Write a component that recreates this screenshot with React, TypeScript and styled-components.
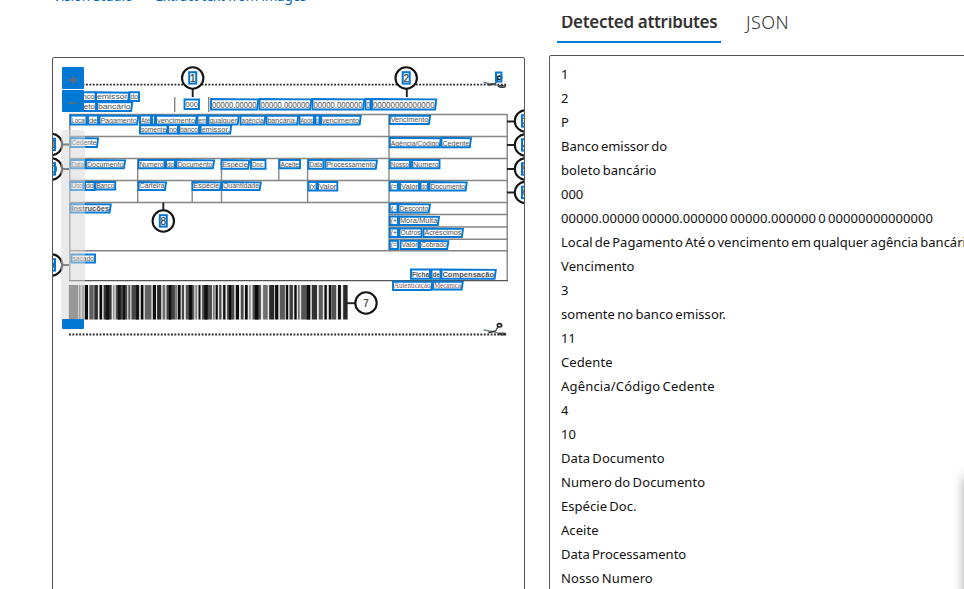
import React from "react";
import styled, { createGlobalStyle } from "styled-components";

const GlobalStyle = createGlobalStyle`
  * { box-sizing: border-box; }
  html, body { margin: 0; background: #fff; overflow: hidden; }
  body { font-family: "Noto Sans", "Open Sans", sans-serif; color: #111; }
`;

const Page = styled.div`
  width: 964px;
  height: 589px;
  overflow: hidden;
  display: grid;
  grid-template-columns: 473px 440px;
  column-gap: 24px;
  padding-left: 52px;
  position: relative;
`;

const LeftColumn = styled.div`
  display: flex;
  flex-direction: column;
  height: 589px;
  min-height: 0;
`;

const Breadcrumb = styled.nav`
  height: 57px;
  flex: none;
  display: flex;
  align-items: flex-start;
  overflow: hidden;
  padding-left: 1px;
`;

const Crumb = styled.a`
  font-size: 13.5px;
  line-height: 20px;
  margin-top: -14px;
  color: #0067b8;
  white-space: pre;
  letter-spacing: -0.19px;
`;

const CrumbArrow = styled.span`
  font-size: 12.5px;
  line-height: 20px;
  margin: -13px 10px 0 9px;
  color: #666;
`;

const Viewer = styled.section`
  position: relative;
  height: 560px;
  flex: none;
  border: 1px solid #555;
  border-radius: 2px;
  overflow: hidden;
`;

const Canvas = styled.svg`
  display: block;
`;

const ZoomControls = styled.div`
  position: absolute;
  left: 9px;
  top: 9px;
  display: flex;
  flex-direction: column;
  gap: 1px;
`;

const ZoomButton = styled.button`
  width: 22px;
  height: 22px;
  padding: 0;
  border: 0;
  border-radius: 1px;
  background: #0078d4;
  color: #6a6a70;
  display: flex;
  align-items: center;
  justify-content: center;
`;

const SliderTrack = styled.div`
  position: absolute;
  left: 8px;
  top: 72px;
  width: 24px;
  height: 190px;
  border-radius: 4px 4px 0 0;
  background: rgba(215, 215, 215, 0.52);
`;

const SliderThumb = styled.div`
  position: absolute;
  left: 9px;
  top: 261px;
  width: 22px;
  height: 10px;
  border-radius: 1px;
  background: #0078d4;
`;

const RightColumn = styled.div`
  display: flex;
  flex-direction: column;
  padding-top: 16px;
  height: 589px;
`;

const Tabs = styled.div`
  display: flex;
  height: 27px;
  margin-left: 8px;
  flex: none;
  overflow: hidden;
`;

const Tab = styled.div<{ $active?: boolean }>`
  height: 27px;
  width: ${(p) => (p.$active ? "164px" : "60px")};
  margin-right: 21px;
  padding-left: 4px;
  font-size: ${(p) => (p.$active ? 17 : 18)}px;
  line-height: 24px;
  font-weight: ${(p) => (p.$active ? 600 : 300)};
  letter-spacing: ${(p) => (p.$active ? -0.32 : 0.4)}px;
  color: #333;
  white-space: nowrap;
  border-bottom: 2px solid ${(p) => (p.$active ? "#0078d4" : "transparent")};
`;

const TabLabel = styled.span`
  display: block;
  margin-top: -6px;
`;

const Results = styled.ul`
  list-style: none;
  margin: 12px 0 0;
  padding: 6px 0 0 11px;
  width: 440px;
  height: 560px;
  flex: none;
  border: 1px solid #555;
  border-radius: 2px;
`;

const ResultRow = styled.li<{ $spacing: number }>`
  height: 24px;
  line-height: 24px;
  font-size: 13px;
  white-space: nowrap;
  letter-spacing: ${(p) => p.$spacing}px;
  word-spacing: -1.2px;
`;

const EdgeShadow = styled.div`
  position: absolute;
  left: 964px;
  top: 477px;
  width: 20px;
  height: 140px;
  box-shadow: 0 0 12px rgba(0, 0, 0, 0.35);
`;

const results: [string, number][] = [
  ["1", 0],
  ["2", 0],
  ["P", 0],
  ["Banco emissor do", -0.03],
  ["boleto bancário", 0.05],
  ["000", 0],
  ["00000.00000 00000.000000 00000.000000 0 00000000000000", 0.06],
  ["Local de Pagamento Até o vencimento em qualquer agência bancária. Após o vencimento", 0],
  ["Vencimento", 0.1],
  ["3", 0],
  ["somente no banco emissor.", 0.05],
  ["11", -0.3],
  ["Cedente", 0.1],
  ["Agência/Código Cedente", 0.18],
  ["4", 0],
  ["10", 0],
  ["Data Documento", 0.08],
  ["Numero do Documento", 0.1],
  ["Espécie Doc.", 0.05],
  ["Aceite", 0.05],
  ["Data Processamento", 0],
  ["Nosso Numero", 0.1],
];

type WordSpec = [string, number, number, number, number, string?];

/* text, left, right, top, bottom, style */
const words: WordSpec[] = [
  ["Banco", 72, 95.5, 92.3, 101],
  ["emissor", 96, 128.5, 92.3, 101],
  ["do", 129.5, 139, 92.3, 101],
  ["boleto", 72, 96, 102, 111],
  ["bancário", 97, 131.5, 102, 111],
  ["000", 184.5, 199, 99.5, 109],
  ["00000.00000", 211, 257.5, 99, 109.5],
  ["00000.000000", 259.5, 310.5, 99, 109.5],
  ["00000.000000", 312.5, 363.5, 99, 109.5],
  ["0", 365.5, 370.5, 99, 109.5],
  ["00000000000000", 372, 435.5, 99, 109.5],
  ["Local", 70.5, 86.5, 115.5, 124.5],
  ["de", 88, 98, 115.5, 124.5],
  ["Pagamento", 99.5, 137.5, 115.5, 124.5],
  ["Até", 140, 151, 115.5, 124.5],
  ["o", 152, 155, 115.5, 124.5],
  ["vencimento", 156, 196, 115.5, 124.5],
  ["em", 197.5, 207, 115.5, 124.5],
  ["qualquer", 208.5, 238, 115.5, 124.5],
  ["agência", 240.5, 264.5, 115.5, 124.5],
  ["bancária.", 266.5, 297.5, 115.5, 124.5],
  ["Após", 299.5, 314, 115.5, 124.5],
  ["o", 315.5, 319.5, 115.5, 124.5],
  ["vencimento", 321, 360, 115.5, 124.5],
  ["somente", 140, 167, 125, 133.5],
  ["no", 168, 178, 125, 133.5],
  ["banco", 179, 199, 125, 133.5],
  ["emissor.", 200.5, 230.5, 125, 133.5],
  ["Vencimento", 389.8, 429.3, 115.5, 124],
  ["Agência/Código", 389.8, 440, 137.8, 147.3],
  ["Cedente", 441.5, 470.2, 137.8, 147.3],
  ["Cedente", 70.5, 97.3, 138, 147],
  ["Data", 70.5, 85, 160, 168.3],
  ["Documento", 86, 124.3, 160, 168.3],
  ["Numero", 138.5, 164.5, 160, 168.3],
  ["do", 166, 175, 160, 168.3],
  ["Documento", 176.5, 213.3, 160, 168.3],
  ["Espécie", 221.5, 248.5, 160, 168.8],
  ["Doc.", 251, 265.5, 160, 168.8],
  ["Aceite", 279.5, 300, 160, 168.3],
  ["Data", 308.5, 323.5, 160, 168.8],
  ["Processamento", 325.5, 376.2, 160, 168.8],
  ["Nosso", 389.8, 410, 160, 168.3],
  ["Numero", 412, 439.5, 160, 168.3],
  ["Uso", 70.5, 83.5, 182, 190],
  ["do", 85, 94.5, 182, 190],
  ["Banco", 95.5, 115.2, 182, 189.5],
  ["Carteira", 138.5, 165.3, 182, 190],
  ["Espécie", 192.5, 220.3, 182, 190],
  ["Quantidade", 222, 260, 182, 190],
  ["(x", 308.5, 316.5, 182, 190.5],
  ["Valor", 318, 337.3, 182, 190.5],
  ["(=", 389.8, 398, 182, 190.5],
  ["Valor", 400, 419, 182, 190.5],
  ["do", 420.5, 428, 182, 190.5],
  ["Documento", 429.5, 466, 182, 190.5],
  ["Instruções", 70.5, 110, 204, 212.5, "bold"],
  ["(-", 389.8, 397.5, 204, 212.5],
  ["Desconto", 398.5, 429.2, 204, 212.5],
  ["(+", 389.8, 398, 216.5, 225],
  ["Mora/Multa", 399, 438.2, 216.5, 225],
  ["(+", 389.8, 398, 228.5, 237],
  ["Outros", 399.5, 421.5, 228.5, 237],
  ["Acréscimos", 423.5, 462.2, 228.5, 237],
  ["(=", 389.8, 398, 240.8, 249],
  ["Valor", 400.5, 418.5, 240.8, 249],
  ["Cobrado", 420, 447.6, 240.8, 249],
  ["sacado", 71.5, 95, 254.5, 262.5],
  ["Ficha", 411, 430, 269.5, 278.7, "bold"],
  ["de", 431.5, 440.5, 269.5, 278.7, "bold"],
  ["Compensação", 441.5, 495, 269.5, 278.7, "bold"],
  ["Autenticação", 393, 431.5, 281.5, 290, "serif"],
  ["Mecânica", 433, 462, 281.5, 289.5, "serif"],
];

const rules: [number, number, number, number][] = [
  [69.5, 114.5, 507.5, 114.5],
  [69.5, 136.5, 507.5, 136.5],
  [69.5, 158.5, 507.5, 158.5],
  [69.5, 180.5, 507.5, 180.5],
  [69.5, 202.5, 507.5, 202.5],
  [69.5, 250.8, 507.5, 250.8],
  [389, 214.5, 507.5, 214.5],
  [389, 227, 507.5, 227],
  [389, 239.2, 507.5, 239.2],
  [69.8, 114, 69.8, 281],
  [507.2, 114, 507.2, 281],
  [389, 114, 389, 251],
  [137.7, 158, 137.7, 203],
  [221.5, 158, 221.5, 203],
  [307.6, 158, 307.6, 203],
  [278.8, 158, 278.8, 181],
  [192.2, 180, 192.2, 203],
  [174.7, 97, 174.7, 112],
  [208.7, 97, 208.7, 112],
];

type CalloutSpec = { x: number; y: number; label: string; boxed?: boolean; stem: [number, number, number, number] };

const callouts: CalloutSpec[] = [
  { x: 192.7, y: 78, label: "1", boxed: true, stem: [192.7, 89, 192.7, 97] },
  { x: 406.2, y: 78, label: "2", boxed: true, stem: [406.8, 89, 406.8, 97] },
  { x: 525.5, y: 121, label: "3", boxed: true, stem: [507, 121.5, 515, 121.5] },
  { x: 525.5, y: 145, label: "4", boxed: true, stem: [507, 145, 515, 145] },
  { x: 525.5, y: 169, label: "5", boxed: true, stem: [507, 169, 515, 169] },
  { x: 525.5, y: 192.5, label: "6", boxed: true, stem: [507, 192.5, 515, 192.5] },
  { x: 51.5, y: 144.5, label: "11", boxed: true, stem: [62, 144.5, 69, 144.5] },
  { x: 51.5, y: 169, label: "10", boxed: true, stem: [62, 169, 69, 169] },
  { x: 51.5, y: 265, label: "9", boxed: true, stem: [62, 265, 69, 265] },
  { x: 163.3, y: 221, label: "8", boxed: true, stem: [163.3, 202.5, 163.3, 210] },
  { x: 366, y: 303, label: "7", stem: [347, 303.2, 355, 303.2] },
];

/* left edge, width, shade */
const bars: [number, number, number][] = [
  [69, 9, 85], [79.3, 1, 90], [82, 1.6, 110], [84.8, 3, 10], [89.5, 4, 95], [94.5, 3.2, 45], [99.7, 2.2, 10],
  [103.8, 7.6, 55], [106, 3, 20], [113.3, 1, 140], [116, 11, 75], [118, 2.5, 20], [123, 2, 20], [128.5, 1.6, 90],
  [131.7, 7.3, 70], [136.5, 2, 10], [141, 2.2, 10], [145, 6.2, 100], [153, 2.8, 15], [157.3, 3.7, 40],
  [162.8, 2.2, 110], [166.7, 8, 65], [169, 2, 10], [175.3, 2, 120], [178.2, 2.2, 10], [182, 1.8, 70],
  [186, 8, 85], [189, 3, 15], [195.5, 1.4, 130], [198.7, 1.6, 20], [202.3, 9.5, 80], [204.5, 3, 15],
  [213.2, 1.3, 120], [215.8, 1.8, 10], [219.3, 2, 80], [223.3, 2, 20], [227.3, 6.8, 75], [229, 2, 10],
  [236, 2.8, 15], [241, 2.4, 75], [245.2, 2.3, 10], [249.3, 1.2, 140], [252.7, 8, 80], [255, 3.2, 10],
  [263.3, 4.2, 110], [269.4, 4.6, 40], [275.3, 2.8, 10], [280, 4.7, 90], [286, 2, 15], [289.7, 3, 60],
  [294.5, 2, 10], [298.2, 1.3, 110], [301.4, 8.6, 85], [307, 3, 15], [312, 4.8, 50], [319, 3.6, 90],
  [324.6, 2, 10], [329, 1.8, 15], [331.5, 4.5, 80], [338.2, 2.5, 15], [343.4, 4, 40],
];

const fontFor = (kind?: string) =>
  kind === "serif" ? "Liberation Serif, serif" : "Liberation Sans, sans-serif";

function Word({ spec }: { spec: WordSpec }) {
  const [text, l, r, t, b, kind] = spec;
  const slant = text.length > 6 ? 0.8 : 0;
  const numeric = t === 99;
  return (
    <g>
      <text
        x={l + 0.9}
        y={b - 1.7}
        textLength={r - l - 1.8}
        lengthAdjust="spacingAndGlyphs"
        fontSize={numeric ? 9.5 : 7.8}
        fontWeight={kind === "bold" ? 700 : 400}
        fontFamily={fontFor(kind)}
        fill={kind === "serif" ? "#80505c" : "#505050"}
      >
        {text}
      </text>
      <path
        d={`M${l} ${t}L${r + slant} ${t + slant / 2}L${r - slant / 2} ${b}L${l} ${b}Z`}
        fill="none"
        stroke="#0078d4"
        strokeWidth="1.9"
      />
    </g>
  );
}

function Callout({ x, y, label, boxed, stem }: CalloutSpec) {
  return (
    <g>
      <path d={`M${stem[0]} ${stem[1]}L${stem[2]} ${stem[3]}`} stroke="#222" strokeWidth="1.9" />
      <circle cx={x} cy={y} r="10.7" fill="#fff" stroke="#151515" strokeWidth="2.1" />
      <text
        x={x}
        y={y + 3.6}
        fontSize="10"
        textAnchor="middle"
        fontFamily="Liberation Sans, sans-serif"
        fill="#333"
        stroke="#333"
        strokeWidth="0.2"
      >
        {label}
      </text>
      {boxed && (
        <rect x={x - 3.5} y={y - 5.8} width="7" height="11.4" fill="none" stroke="#0078d4" strokeWidth="2" />
      )}
    </g>
  );
}

function Scissors({ y }: { y: number }) {
  return (
    <g fill="none" strokeLinecap="round">
      <path d={`M484 ${y - 4}L494 ${y - 2}L504 ${y + 1}`} stroke="#6b8080" strokeWidth="1.3" />
      <path d={`M489 ${y - 1.5}L495.5 ${y - 3}L498 ${y - 7}`} stroke="#333" strokeWidth="1.3" />
      <ellipse cx="499.5" cy={y - 8.7} rx="2.2" ry="1.7" stroke="#222" strokeWidth="1.6" />
      <ellipse cx="502" cy={y} rx="3.6" ry="0.8" stroke="#333" strokeWidth="1.2" />
    </g>
  );
}

function Boleto() {
  return (
    <Canvas width="471" height="531" viewBox="53 58 471 531">
      <g stroke="#2a2a2a" strokeWidth="1.8" strokeDasharray="1.9 1.5">
        <path d="M69 84.7H507" />
        <path d="M69 334.5H507" />
      </g>
      <g stroke="#858585" strokeWidth="1.4">
        {rules.map((r, i) => (
          <line key={i} x1={r[0]} y1={r[1]} x2={r[2]} y2={r[3]} />
        ))}
      </g>
      <path d="M69 280.6H508" stroke="#555" strokeWidth="1.2" />
      <rect x="69" y="285" width="278.5" height="34.5" fill="#e6e6e6" />
      {bars.map(([x, w, c], i) => (
        <rect key={i} x={x - 0.2} y="285" width={w + 0.4} height="34.5" fill={`rgb(${c},${c},${c})`} />
      ))}
      {callouts.map((c) => (
        <Callout key={c.label} {...c} />
      ))}
      <Scissors y={86.5} />
      <rect x="496" y="72.5" width="5.4" height="9" fill="none" stroke="#0078d4" strokeWidth="2" />
      <Scissors y={334} />
      {words.map((w, i) => (
        <Word key={i} spec={w} />
      ))}
    </Canvas>
  );
}

export default function App() {
  return (
    <>
      <GlobalStyle />
      <Page>
        <LeftColumn>
          <Breadcrumb>
            <Crumb>Vision Studio</Crumb>
            <CrumbArrow>›</CrumbArrow>
            <Crumb>Extract text from images</Crumb>
          </Breadcrumb>
          <Viewer>
            <Boleto />
            <SliderTrack />
            <ZoomControls>
              <ZoomButton aria-label="Zoom in">
                <svg width="22" height="22" viewBox="0 0 22 22">
                  <path d="M7 13H15M11 9V17" stroke="currentColor" strokeWidth="1.8" />
                </svg>
              </ZoomButton>
              <ZoomButton aria-label="Zoom out">
                <svg width="22" height="22" viewBox="0 0 22 22">
                  <path d="M7 13H15" stroke="currentColor" strokeWidth="1.6" />
                </svg>
              </ZoomButton>
            </ZoomControls>
            <SliderThumb />
          </Viewer>
        </LeftColumn>
        <RightColumn>
          <Tabs>
            <Tab $active>
              <TabLabel>Detected attributes</TabLabel>
            </Tab>
            <Tab>
              <TabLabel>JSON</TabLabel>
            </Tab>
          </Tabs>
          <Results>
            {results.map(([text, spacing], i) => (
              <ResultRow key={i} $spacing={spacing}>
                {text}
              </ResultRow>
            ))}
          </Results>
        </RightColumn>
        <EdgeShadow />
      </Page>
    </>
  );
}
